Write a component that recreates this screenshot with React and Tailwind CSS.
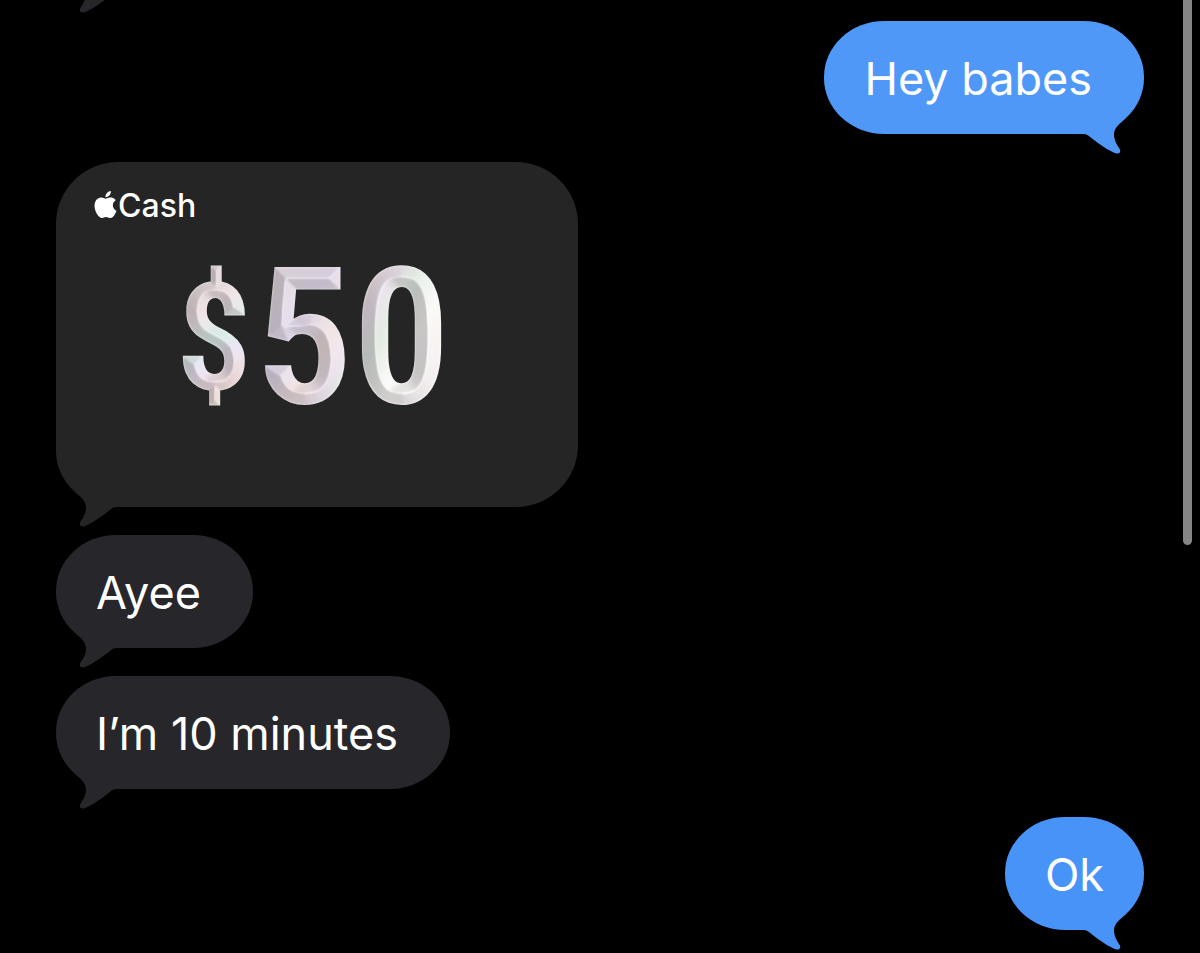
const messages = [
  { id: 1, side: "right", text: "Hey babes", pad: "pl-10 pr-[52px]", bubble: "bg-[#5098f8]", tail: "text-[#5098f8]" },
  { id: 2, side: "left", cash: "50" },
  { id: 3, side: "left", text: "Ayee", pad: "pl-10 pr-[52px]", bubble: "bg-[#27262b]", tail: "text-[#27262b]" },
  { id: 4, side: "left", text: "I’m 10 minutes", pad: "pl-10 pr-[52px]", bubble: "bg-[#27262b]", tail: "text-[#27262b]" },
  { id: 5, side: "right", text: "Ok", pad: "px-10", bubble: "bg-[#4893f8]", tail: "text-[#4893f8]" },
];

function Tail({ side, color }) {
  const place = side === "right" ? "right-0" : "left-0 -scale-x-100";
  return (
    <svg
      aria-hidden="true"
      viewBox="0 0 64 44"
      className={`pointer-events-none absolute -bottom-5 h-11 w-16 ${place} ${color}`}
    >
      <path
        fill="currentColor"
        d="M0 18 L3 24 C7 24 9 26 12 28.500 C20 34.500 28 40.500 35.500 43.200 C39 44 41 42.500 40 39.500 C37 35 34 30 34 24.500 C34 19.500 37 16 41 12.500 L46 8 L20 4 Z"
      />
    </svg>
  );
}

function TextBubble({ side, text, pad, bubble, tail }) {
  return (
    <div className={`relative flex h-[113px] items-center rounded-[60px/56px] pt-0.5 ${pad} ${bubble}`}>
      <p className="text-[45px] leading-[56px] whitespace-nowrap text-white">{text}</p>
      <Tail side={side} color={tail} />
    </div>
  );
}

function AppleMark() {
  return (
    <svg aria-hidden="true" viewBox="0 0 24 24" className="-mt-1 -mr-px -ml-1 size-[27px] shrink-0 fill-white">
      <path d="M12.152 6.896c-.948 0-2.415-1.078-3.96-1.040-2.040.027-3.910 1.183-4.961 3.014-2.117 3.675-.546 9.103 1.519 12.090 1.013 1.454 2.208 3.090 3.792 3.039 1.520-.065 2.090-.987 3.935-.987 1.831 0 2.350.987 3.960.948 1.637-.026 2.676-1.480 3.676-2.948 1.156-1.688 1.636-3.325 1.662-3.415-.039-.013-3.182-1.221-3.220-4.857-.026-3.040 2.480-4.494 2.597-4.559-1.429-2.090-3.623-2.324-4.390-2.376-2-.156-3.675 1.090-4.610 1.090zM15.530 3.830c.843-1.012 1.400-2.427 1.245-3.830-1.207.052-2.662.805-3.532 1.818-.780.896-1.454 2.338-1.273 3.714 1.338.104 2.715-.688 3.559-1.701" />
    </svg>
  );
}

// Stacked erosions of the glyphs add up to a ramp that climbs to the middle of each stroke.
const STEPS = [1, 2, 3, 4, 5, 6, 7, 8, 9, 10, 11, 12];

function BevelFilter() {
  return (
    <svg aria-hidden="true" className="absolute size-0">
      <filter id="bevel" x="0%" y="0%" width="100%" height="100%" colorInterpolationFilters="sRGB">
        <feFlood floodOpacity="0" result="sum0" />
        {STEPS.map((r) => [
          <feMorphology key={`e${r}`} in="SourceAlpha" operator="erode" radius={r} result={`e${r}`} />,
          <feComposite
            key={`s${r}`}
            in={`e${r}`}
            in2={`sum${r - 1}`}
            operator="arithmetic"
            k1="0"
            k2="0.08"
            k3="1"
            k4="0"
            result={`sum${r}`}
          />,
        ])}
        <feGaussianBlur in="sum12" stdDeviation="1.3" result="height" />
        <feDiffuseLighting in="height" surfaceScale="12" diffuseConstant="1.05" lightingColor="#ffffff" result="light">
          <feDistantLight azimuth="-20" elevation="55" />
        </feDiffuseLighting>
        <feComponentTransfer in="light" result="soft">
          <feFuncR type="linear" slope="0.22" intercept="0.8" />
          <feFuncG type="linear" slope="0.22" intercept="0.79" />
          <feFuncB type="linear" slope="0.21" intercept="0.79" />
        </feComponentTransfer>
        <feBlend in="SourceGraphic" in2="soft" mode="multiply" result="shaded" />
        <feComposite in="shaded" in2="SourceAlpha" operator="in" />
      </filter>
    </svg>
  );
}

function CashBubble({ amount }) {
  return (
    <article className="relative flex h-[345px] w-[522px] flex-col rounded-[62px_62px_62px_60px/62px_62px_62px_56px] bg-[#252525] px-10 pt-6">
      <header className="flex items-center">
        <AppleMark />
        <h2 className="text-[32px] leading-10 font-medium text-white">Cash</h2>
      </header>
      <BevelFilter />
      <p className="mt-3 flex items-center justify-center gap-1 pr-2 font-['Roboto_Condensed',Roboto,sans-serif] font-bold text-transparent [filter:url(#bevel)]">
        <span className="bg-[linear-gradient(150deg,#e6dde0_25%,#f0e6ea_38%,#dcf0ee_50%,#ece6f4_60%,#f0e0e2_72%,#e8e8de_80%)] bg-clip-text text-[150px] leading-[200px]">
          $
        </span>
        <span className="bg-[linear-gradient(120deg,#e8e2ea_15%,#e6e0f2_30%,#f2e6e6_42%,#efe8f4_50%,#e4eee8_58%,#fafafa_70%,#f2eef4)] bg-clip-text text-[192px] leading-[200px]">
          {amount}
        </span>
      </p>
      <Tail side="left" color="text-[#252525]" />
    </article>
  );
}

export default function App() {
  return (
    <main className="relative h-screen min-h-[953px] overflow-hidden bg-black font-['Inter','Liberation_Sans',sans-serif]">
      <ol className="-mt-[7px] flex flex-col gap-7 px-14">
        <li className="relative h-0">
          <Tail side="left" color="text-[#27262b]" />
        </li>
        {messages.map((m) => (
          <li key={m.id} className={m.side === "right" ? "flex justify-end" : "flex justify-start"}>
            {m.cash ? <CashBubble amount={m.cash} /> : <TextBubble {...m} />}
          </li>
        ))}
      </ol>
      <div aria-hidden="true" className="absolute top-0 right-2 h-[545px] w-[9px] rounded-b-full bg-[#858585]" />
    </main>
  );
}
